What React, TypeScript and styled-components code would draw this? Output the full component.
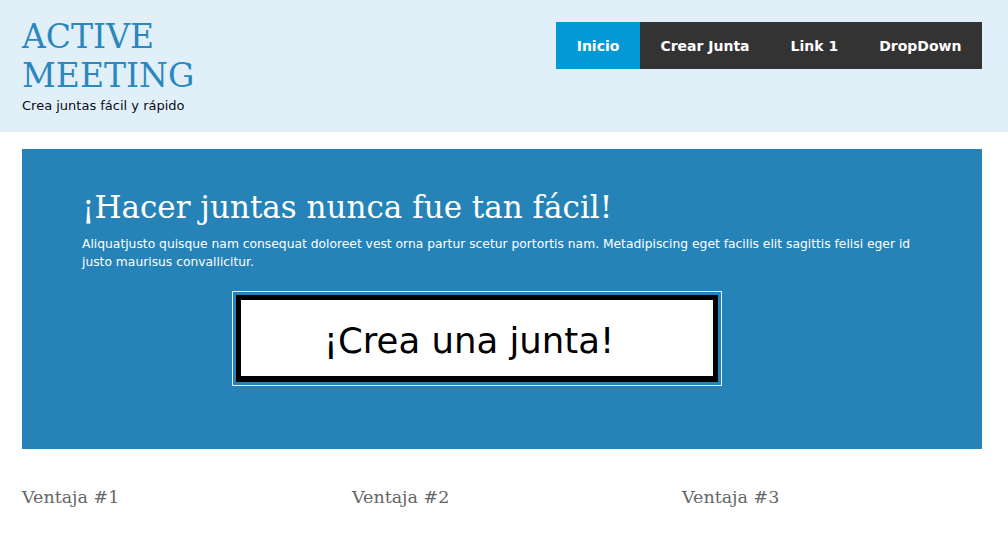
import styled, {createGlobalStyle} from "styled-components";

const GlobalStyle = createGlobalStyle`
  html, body {
    margin: 0;
    padding: 0;
    background: #ffffff;
  }
  body {
    font-family: "DejaVu Sans", Verdana, sans-serif;
  }
`;

const Page = styled.div`
  width: 1008px;
  min-height: 551px;
  background: #ffffff;
`;

const Header = styled.header`
  height: 132px;
  background-color: #e1f0f8;
  display: flex;
  justify-content: space-between;
  align-items: flex-start;
  padding: 0 26px 0 22px;
  box-sizing: border-box;
`;

const Brand = styled.div`
  padding-top: 17px;
`;

const Logo = styled.h1`
  margin: 0;
  font-family: "DejaVu Serif", Georgia, serif;
  font-weight: normal;
  font-size: 33px;
  line-height: 39px;
  color: #2a87bf;
`;

const Tagline = styled.p`
  margin: 3px 0 0 0;
  font-size: 13px;
  line-height: 16px;
  color: #0b0b1a;
`;

const Nav = styled.nav`
  margin-top: 22px;
  display: flex;
  height: 47px;
  background-color: #333333;
`;

const NavItem = styled.a<{$active?: boolean}>`
  display: flex;
  align-items: center;
  padding: 0 20.5px;
  font-size: 14px;
  font-weight: bold;
  color: #ffffff;
  text-decoration: none;
  background-color: ${(p) => (p.$active ? "#0399d6" : "transparent")};
`;

const Main = styled.main`
  padding: 17px 26px 0 22px;
`;

const Hero = styled.section`
  height: 300px;
  background-color: #2683b8;
  padding: 38px 50px 0 60px;
  box-sizing: border-box;
`;

const HeroTitle = styled.h2`
  margin: 0;
  font-family: "DejaVu Serif", Georgia, serif;
  font-weight: normal;
  font-size: 31px;
  line-height: 40px;
  color: #ffffff;
`;

const HeroText = styled.p`
  margin: 8px 0 0 0;
  font-size: 12.3px;
  line-height: 18px;
  color: #ffffff;
`;

const CtaFrame = styled.div`
  margin: 20px 0 0 150px;
  width: 490px;
  height: 95px;
  border: 1px solid #e8f2f8;
  box-sizing: border-box;
  padding: 3px;
`;

const CtaButton = styled.button`
  width: 100%;
  height: 100%;
  box-sizing: border-box;
  border: 5px solid #000000;
  border-bottom-width: 6px;
  background: #ffffff;
  font-family: "DejaVu Sans", Verdana, sans-serif;
  font-size: 35.5px;
  color: #000000;
  padding: 5px 16px 0 0;
  cursor: pointer;
`;

const Features = styled.section`
  display: grid;
  grid-template-columns: repeat(3, 1fr);
  column-gap: 30px;
  padding-top: 36px;
`;

const FeatureTitle = styled.h3`
  margin: 0;
  font-family: "DejaVu Serif", Georgia, serif;
  font-weight: normal;
  font-size: 17.5px;
  line-height: 24px;
  color: #666666;
`;

const navLinks = ["Inicio", "Crear Junta", "Link 1", "DropDown"];
const features = ["Ventaja #1", "Ventaja #2", "Ventaja #3"];

const App = () => {
  return (
    <Page>
      <GlobalStyle />
      <Header>
        <Brand>
          <Logo>
            ACTIVE
            <br />
            MEETING
          </Logo>
          <Tagline>Crea juntas fácil y rápido</Tagline>
        </Brand>
        <Nav>
          {navLinks.map((link, i) => (
            <NavItem key={link} href="#" $active={i === 0}>
              {link}
            </NavItem>
          ))}
        </Nav>
      </Header>
      <Main>
        <Hero>
          <HeroTitle>¡Hacer juntas nunca fue tan fácil!</HeroTitle>
          <HeroText>
            Aliquatjusto quisque nam consequat doloreet vest orna partur scetur portortis nam. Metadipiscing eget facilis elit sagittis felisi eger id justo maurisus convallicitur.
          </HeroText>
          <CtaFrame>
            <CtaButton>¡Crea una junta!</CtaButton>
          </CtaFrame>
        </Hero>
        <Features>
          {features.map((f) => (
            <FeatureTitle key={f}>{f}</FeatureTitle>
          ))}
        </Features>
      </Main>
    </Page>
  );
};

export default App;
